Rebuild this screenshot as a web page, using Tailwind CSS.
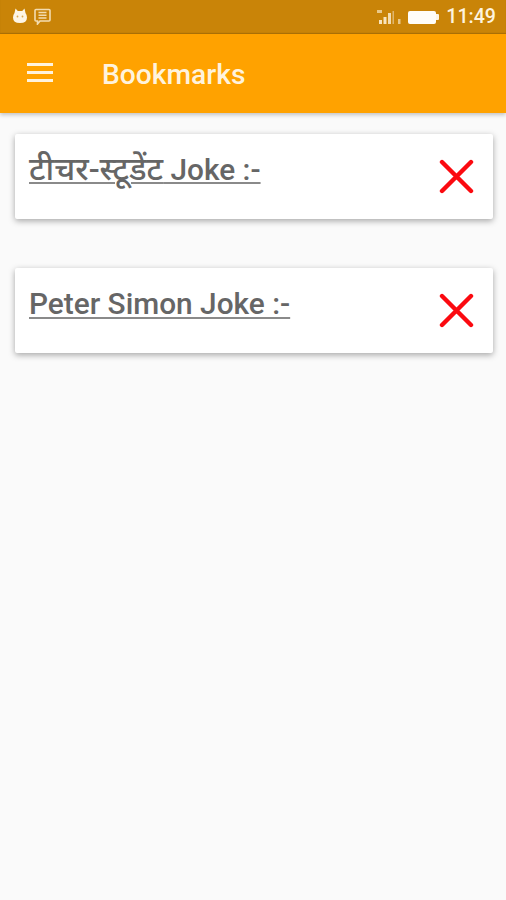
<!DOCTYPE html>
<html>
<head>
<meta charset="utf-8">
<script src="https://cdn.jsdelivr.net/npm/@tailwindcss/browser@4"></script>
</head>
<body class="m-0 bg-[#fafafa] font-['Roboto',sans-serif]">
<div class="w-[506px] h-[900px] overflow-hidden flex flex-col">
  <div class="h-[34px] bg-[#c98408] flex items-center pl-[13px] pr-[10px] shadow-[inset_0_-1px_1px_rgba(0,0,0,0.15)]">
    <svg class="w-[15px] h-[16px] -mt-[2px]" viewBox="0 0 15 16"><path d="M2.5 0.5 L4.8 3 H9.2 L11.5 0.5 L12.5 5 Q14 7 14 9.5 Q14 15 7 15 Q0 15 0 9.5 Q0 7 1.5 5 Z" fill="#fdf5e6"/><circle cx="4.5" cy="8.5" r="0.9" fill="#d9a850"/><circle cx="9.5" cy="8.5" r="0.9" fill="#d9a850"/></svg>
    <svg class="w-[17px] h-[17px] ml-[6px] -mt-[1px]" viewBox="0 0 17 17" fill="none"><path d="M2 1.5 H15 Q16 1.5 16 2.5 V12 Q16 13 15 13 H6 L3.5 16 V13 H2 Q1 13 1 12 V2.5 Q1 1.5 2 1.5 Z" stroke="#f3dcb0" stroke-width="1.6"/><path d="M4.5 4.5H12.5M4.5 7.2H12.5M4.5 10H12.5" stroke="#f3dcb0" stroke-width="1.4"/></svg>
    <div class="ml-auto flex items-center">
      <svg class="w-[25px] h-[16px]" viewBox="0 0 25 16"><rect x="0" y="1" width="5" height="3" fill="#e9c88a"/><rect x="2" y="11" width="3" height="4" fill="#f8e4bd"/><rect x="6.5" y="8" width="3" height="7" fill="#f8e4bd"/><rect x="11" y="4" width="3" height="11" fill="#f3dcb0"/><rect x="15.5" y="2" width="1.5" height="13" fill="#e0b66e"/><rect x="21" y="10" width="2.5" height="5" fill="#e9c88a"/></svg>
      <div class="ml-[6px] w-[28px] h-[13px] bg-[#fffdf8] rounded-[2px]"></div>
      <div class="w-[3px] h-[6px] bg-[#fdf5e6] rounded-r-[1px]"></div>
      <span class="ml-[7px] text-[19.6px] leading-none font-medium text-[#fdf3df]">11:49</span>
    </div>
  </div>
  <div class="h-[79px] bg-[#ffa200] flex items-center pl-[27px] shadow-[0_2px_4px_rgba(0,0,0,0.22)] relative">
    <div class="flex flex-col gap-[5px] w-[26px] -mt-[3px]">
      <div class="h-[3px] bg-[#fff3dd]"></div>
      <div class="h-[3px] bg-[#fff3dd]"></div>
      <div class="h-[3px] bg-[#fff3dd]"></div>
    </div>
    <span class="ml-[49px] text-[28.2px] font-medium leading-none text-[#fff3dd] mt-[3px]">Bookmarks</span>
  </div>
  <div class="pt-[20.5px] pl-[14.5px] flex flex-col gap-[49px]">
    <div class="h-[85px] w-[478px] bg-white rounded-[2px] shadow-[0_2px_6px_rgba(0,0,0,0.34)] flex justify-between pl-[14.5px] pr-[19px]">
      <span class="mt-[19px] text-[29.8px] leading-[32px] font-medium text-[#666666] underline decoration-2 decoration-[#8a8a8a] underline-offset-[2px] font-['Roboto','Noto_Sans_Devanagari','Noto_Sans',sans-serif]"><span class="text-[32.2px] leading-[32px]">टीचर-स्टूडेंट</span> Joke :-</span>
      <svg class="w-[35px] h-[35px] mt-[25px]" viewBox="0 0 35 35"><path d="M3 3L32 32M32 3L3 32" stroke="#fb0a10" stroke-width="4.4" stroke-linecap="round"/></svg>
    </div>
    <div class="h-[85px] w-[478px] bg-white rounded-[2px] shadow-[0_2px_6px_rgba(0,0,0,0.34)] flex justify-between pl-[14.5px] pr-[19px]">
      <span class="mt-[20px] text-[29.8px] leading-[32px] font-medium text-[#666666] underline decoration-2 decoration-[#8a8a8a] underline-offset-[3px]">Peter Simon Joke :-</span>
      <svg class="w-[35px] h-[35px] mt-[25px]" viewBox="0 0 35 35"><path d="M3 3L32 32M32 3L3 32" stroke="#fb0a10" stroke-width="4.4" stroke-linecap="round"/></svg>
    </div>
  </div>
</div>
</body>
</html>
